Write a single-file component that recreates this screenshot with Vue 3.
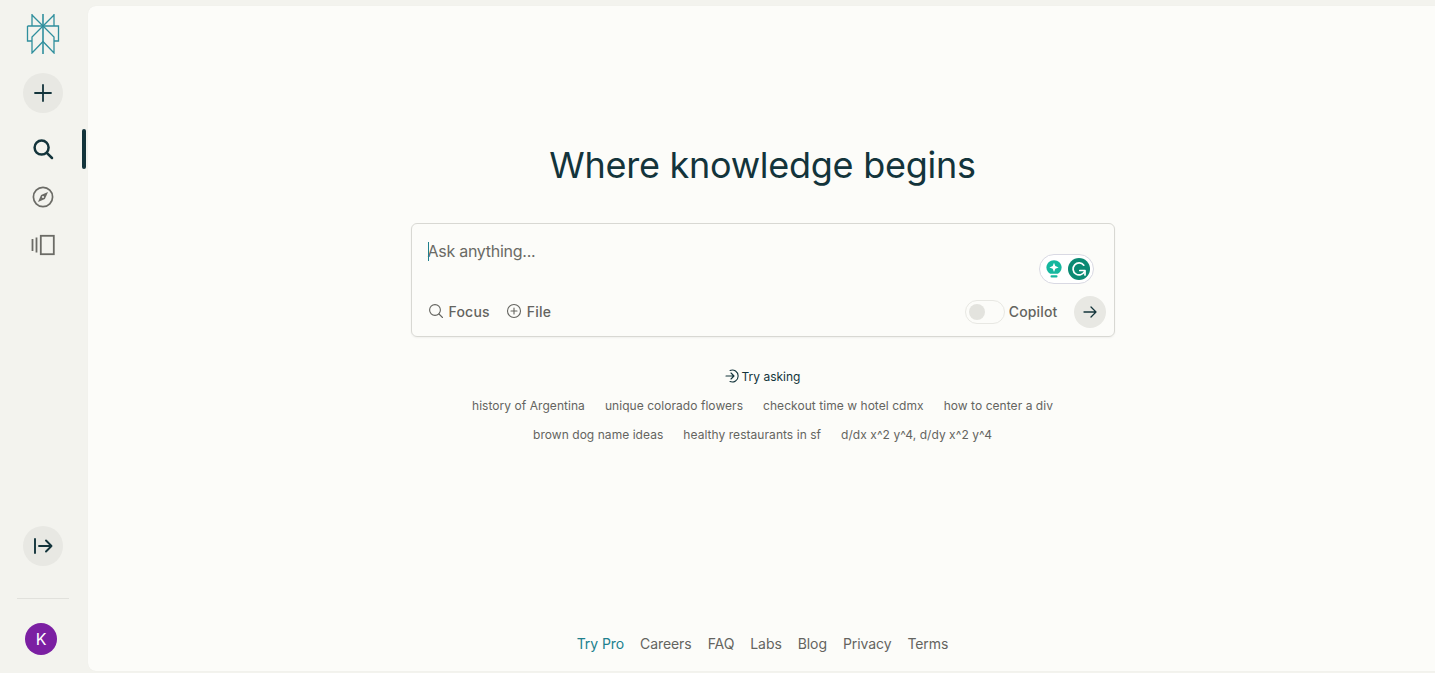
<script setup>
const row1 = ['history of Argentina', 'unique colorado flowers', 'checkout time w hotel cdmx', 'how to center a div']
const row2 = ['brown dog name ideas', 'healthy restaurants in sf', 'd/dx x^2 y^4, d/dy x^2 y^4']
const links = ['Careers', 'FAQ', 'Labs', 'Blog', 'Privacy', 'Terms']
</script>

<template>
  <div class="page">
    <aside class="side">
      <svg class="logo" width="34" height="40" viewBox="0 0 34 40" fill="none" stroke="#2f8f9d" stroke-width="1.3">
        <path d="M17 0V40" stroke-width="1.6" />
        <path d="M6 0V12M28 0V12M6 1L17 12L28 1" />
        <path d="M1.5 12H32.5V27H28M1.5 12V27H6" />
        <path d="M17 12L6 23V39L17 27.5L28 39V23L17 12Z" />
      </svg>
      <button class="round add">
        <svg width="20" height="20" viewBox="0 0 20 20" fill="none" stroke="#13343b" stroke-width="1.8" stroke-linecap="round"><path d="M10 2V18M2 10H18" /></svg>
      </button>
      <nav class="nav">
        <div class="nav-item active">
          <svg width="22" height="22" viewBox="0 0 22 22" fill="none" stroke="#13343b" stroke-width="2.5" stroke-linecap="round"><circle cx="9.6" cy="9.6" r="7" /><path d="M14.8 14.8L20 20" /></svg>
        </div>
        <div class="nav-item">
          <svg width="22" height="22" viewBox="0 0 22 22" fill="none" stroke="#6b6b66" stroke-width="1.7"><circle cx="11" cy="11" r="9.6" /><path d="M16 6L12.9 12.9L6 16L9.1 9.1Z" fill="#6b6b66" stroke="none" /><circle cx="11" cy="11" r="1.1" fill="#f3f3ee" stroke="none" /></svg>
        </div>
        <div class="nav-item">
          <svg width="24" height="22" viewBox="0 0 24 22" fill="none" stroke="#6b6b66" stroke-width="1.8"><rect x="9.8" y="1.8" width="13" height="18.4" /><path d="M1.5 5V17M5.5 3.5V18.5" /></svg>
        </div>
      </nav>
      <div class="side-bottom">
        <button class="round">
          <svg width="20" height="18" viewBox="0 0 20 18" fill="none" stroke="#13343b" stroke-width="1.9" stroke-linecap="round" stroke-linejoin="round"><path d="M2 2V16M6 9H18.5M13 3.5L18.5 9L13 14.5" /></svg>
        </button>
        <div class="divider"></div>
        <div class="avatar">K</div>
      </div>
    </aside>

    <main class="main">
      <h1 class="title">Where knowledge begins</h1>
      <div class="box">
        <div class="ask"><span class="caret"></span>Ask anything...</div>
        <div class="controls">
          <div class="left">
            <span class="ctl">
              <svg width="16" height="16" viewBox="0 0 16 16" fill="none" stroke="#64645f" stroke-width="1.1" stroke-linecap="round"><circle cx="7" cy="7" r="5.4" /><path d="M11 11L14.5 14.5" /></svg>
              Focus
            </span>
            <span class="ctl">
              <svg width="16" height="16" viewBox="0 0 16 16" fill="none" stroke="#64645f" stroke-width="1.1" stroke-linecap="round"><circle cx="8" cy="8" r="6.5" /><path d="M8 5V11M5 8H11" /></svg>
              File
            </span>
          </div>
          <div class="right">
            <span class="toggle"><span class="knob"></span></span>
            <span class="copilot">Copilot</span>
            <button class="send">
              <svg width="14" height="12" viewBox="0 0 14 12" fill="none" stroke="#13343b" stroke-width="1.3" stroke-linecap="round" stroke-linejoin="round"><path d="M1 6H13M8 1L13 6L8 11" /></svg>
            </button>
          </div>
        </div>
        <div class="grammarly">
          <svg width="16" height="18" viewBox="0 0 16 18"><path d="M8 0.2C12.2 0.2 15.6 3.4 15.6 7.4C15.6 10.4 13.8 12.2 11.8 13.8H4.2C2.2 12.2 0.4 10.4 0.4 7.4C0.4 3.4 3.8 0.2 8 0.2Z" fill="#15b79e" /><path d="M8 2.8L9.3 6.1L12.6 7.4L9.3 8.7L8 12L6.7 8.7L3.4 7.4L6.7 6.1Z" fill="#ffffff" /><rect x="4.5" y="15.2" width="7" height="2.4" rx="1" fill="#15b79e" /></svg>
          <span class="g-badge">
            <svg width="16" height="16" viewBox="0 0 16 16" fill="none" stroke="#ffffff" stroke-width="1.7" stroke-linecap="round" stroke-linejoin="round"><path d="M12.8 4.2A6 6 0 1 0 13.5 10.5" /><path d="M8.8 9.5H14V14" /></svg>
          </span>
        </div>
      </div>

      <div class="try">
        <svg width="14" height="14" viewBox="0 0 14 14" fill="none" stroke="#13343b" stroke-width="1.1" stroke-linecap="round" stroke-linejoin="round"><path d="M1 7H9M6 4L9 7L6 10" /><path d="M5 1.4A6 6 0 1 1 5 12.6" /></svg>
        <span>Try asking</span>
      </div>
      <div class="chips">
        <div class="chip-row"><span v-for="t in row1" :key="t">{{ t }}</span></div>
        <div class="chip-row"><span v-for="t in row2" :key="t">{{ t }}</span></div>
      </div>

      <footer class="foot">
        <a class="pro">Try Pro</a>
        <a v-for="l in links" :key="l">{{ l }}</a>
      </footer>
    </main>
  </div>
</template>

<style>
html, body { margin: 0; background: #f3f3ee; overflow: hidden; }
</style>

<style scoped>
.page {
  display: flex;
  width: 1435px;
  height: 673px;
  background: #f3f3ee;
  font-family: Inter, "Liberation Sans", sans-serif;
  color: #64645f;
}
.side {
  width: 88px;
  flex: none;
  display: flex;
  flex-direction: column;
  align-items: center;
  box-sizing: border-box;
  padding-top: 14px;
  padding-right: 2px;
}
.logo { display: block; margin-bottom: 19px; }
.round {
  width: 40px;
  height: 40px;
  border: 0;
  padding: 0;
  border-radius: 50%;
  background: #e8e8e3;
  display: flex;
  align-items: center;
  justify-content: center;
}
.nav { margin-top: 16px; width: 100%; display: flex; flex-direction: column; gap: 8px; }
.nav-item { height: 40px; display: flex; align-items: center; justify-content: center; position: relative; }
.active::after {
  content: "";
  position: absolute;
  right: 0;
  top: 0;
  width: 4px;
  height: 40px;
  border-radius: 2px;
  background: #13343b;
}
.side-bottom {
  margin-top: auto;
  display: flex;
  flex-direction: column;
  align-items: center;
  padding-bottom: 18px;
}
.divider { width: 52px; height: 1px; background: #e1e1dc; margin: 32px 0 24px; }
.avatar {
  width: 32px;
  height: 32px;
  border-radius: 50%;
  background: #7b1fa2;
  color: #fff;
  font-size: 16px;
  line-height: 32px;
  text-align: center;
  margin-right: 4px;
}
.main {
  flex: 1;
  margin: 6px 0 2px;
  padding-left: 2px;
  background: #fcfcf9;
  border-radius: 8px 0 0 8px;
  display: flex;
  flex-direction: column;
  align-items: center;
  box-shadow: 0 0 1px rgba(0, 0, 0, 0.06);
}
.title {
  margin: 137px 0 0;
  font-size: 36px;
  line-height: 44px;
  font-weight: 400;
  color: #13343b;
  letter-spacing: -0.27px;
}
.box {
  position: relative;
  box-sizing: border-box;
  width: 704px;
  height: 114px;
  margin-top: 36px;
  padding: 15px 8px 8px 16px;
  border: 1px solid #d8d8d3;
  border-radius: 6px;
  box-shadow: 0 1px 2px rgba(0, 0, 0, 0.05);
  display: flex;
  flex-direction: column;
  justify-content: space-between;
}
.ask { font-size: 16px; line-height: 24px; color: #6a6a65; position: relative; letter-spacing: -0.27px; }
.caret { position: absolute; left: 0; top: 3px; width: 1px; height: 19px; background: #20808d; }
.controls { display: flex; justify-content: space-between; align-items: center; height: 32px; }
.left { display: flex; gap: 16px; align-items: center; padding-bottom: 2px; }
.ctl { display: flex; gap: 5px; align-items: center; font-size: 14px; font-weight: 500; color: #64645f; letter-spacing: 0.2px; }
.right { display: flex; align-items: center; }
.toggle {
  box-sizing: border-box;
  width: 40px;
  height: 24px;
  border: 1px solid #e8e8e3;
  border-radius: 12px;
  display: flex;
  align-items: center;
  padding-left: 3px;
}
.knob { width: 16px; height: 16px; border-radius: 50%; background: #e3e3de; }
.copilot { font-size: 14px; font-weight: 500; margin: 0 16px 2px 4px; color: #64645f; letter-spacing: 0.15px; }
.send {
  width: 32px;
  height: 32px;
  border: 0;
  padding: 0;
  border-radius: 50%;
  background: #e8e8e3;
  display: flex;
  align-items: center;
  justify-content: center;
}
.grammarly {
  position: absolute;
  right: 20px;
  top: 30px;
  box-sizing: border-box;
  width: 55px;
  height: 30px;
  border: 1px solid #d9d9e3;
  border-radius: 15px;
  background: #fff;
  display: flex;
  align-items: center;
  gap: 6px;
  padding-left: 6px;
}
.g-badge {
  width: 22px;
  height: 22px;
  border-radius: 50%;
  background: #0b8a73;
  display: flex;
  align-items: center;
  justify-content: center;
}
.try {
  margin-top: 31px;
  height: 16px;
  display: flex;
  align-items: center;
  gap: 3px;
  font-size: 12px;
  font-weight: 400;
  color: #13343b;
}
.chips { margin-top: 12px; display: flex; flex-direction: column; gap: 9px; }
.chip-row {
  display: flex;
  justify-content: center;
  gap: 20px;
  font-size: 12px;
  line-height: 20px;
  letter-spacing: 0.05px;
  color: #64645f;
}
.foot {
  margin-top: auto;
  padding-bottom: 17px;
  display: flex;
  gap: 16px;
  font-size: 14px;
  line-height: 20px;
  letter-spacing: -0.08px;
  color: #64645f;
}
.pro { color: #20808d; }
</style>
